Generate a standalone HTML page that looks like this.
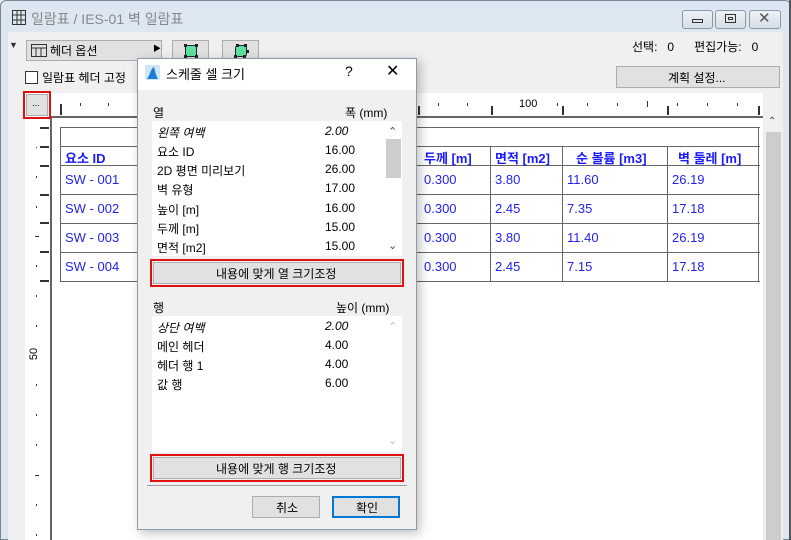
<!DOCTYPE html>
<html><head><meta charset="utf-8"><style>
*{margin:0;padding:0;box-sizing:border-box}
body{width:791px;height:540px;overflow:hidden;position:relative;background:#f0f0f0;font-family:"Liberation Sans","Noto Sans CJK KR",sans-serif;font-size:12px;color:#000}
.a{position:absolute}
.t{position:absolute;white-space:nowrap}
.blue{color:#1a1aff}
.cell{position:absolute;font-size:13px;color:#2222ee}
.hl{position:absolute;background:#666;height:1px}
.vl{position:absolute;background:#666;width:1px}
.tick{position:absolute;background:#333}
.dot{position:absolute;width:3px;height:3px;background:#222}
</style></head><body>
<div class="a" style="left:0;top:0;width:791px;height:540px;background:#dde7f2;border:1px solid #7a8796;border-radius:6px 6px 0 0"></div>
<div class="a" style="left:8px;top:32px;width:775px;height:508px;background:#f0f0f0"></div>
<div class="a" style="left:789px;top:0;width:2px;height:540px;background:#555"></div>
<svg class="a" style="left:12px;top:10px" width="15" height="16"><rect x="0.5" y="0.5" width="13" height="14" fill="none" stroke="#333"/><path d="M0 5H14M0 10H14M5 0V15M9 0V15" stroke="#333"/></svg>
<div class="t" style="left:31px;top:9px;font-size:14px;color:#888">일람표 / IES-01 벽 일람표</div>
<div class="a" style="left:682px;top:10px;width:31px;height:19px;border:1px solid #8a98a8;border-radius:3px;background:linear-gradient(#eef2f7,#d5dde6)"></div>
<div class="a" style="left:692px;top:19px;width:11px;height:4px;border:1px solid #333"></div>
<div class="a" style="left:715px;top:10px;width:31px;height:19px;border:1px solid #8a98a8;border-radius:3px;background:linear-gradient(#eef2f7,#d5dde6)"></div>
<div class="a" style="left:725px;top:14px;width:11px;height:9px;border:1px solid #333"></div>
<div class="a" style="left:728px;top:17px;width:5px;height:3px;border:1px solid #333"></div>
<div class="a" style="left:749px;top:10px;width:32px;height:19px;border:1px solid #8a98a8;border-radius:3px;background:linear-gradient(#eef2f7,#d5dde6)"></div>
<div class="t" style="left:758px;top:9px;font-size:15px;color:#555">✕</div>
<div class="t" style="left:9px;top:40px;font-size:9px;color:#333">▼</div>
<div class="a" style="left:26px;top:40px;width:136px;height:21px;border:1px solid #adadad;background:#e1e1e1"></div>
<svg class="a" style="left:31px;top:44px" width="16" height="13"><rect x="0.5" y="0.5" width="15" height="12" fill="none" stroke="#333"/><path d="M0 4H16M5 4V13M10 4V13" stroke="#333"/></svg>
<div class="t" style="left:50px;top:42px;font-size:12px">헤더 옵션</div>
<div class="t" style="left:153px;top:43px;font-size:8px">▶</div>
<div class="a" style="left:172px;top:40px;width:37px;height:21px;border:1px solid #adadad;background:#e1e1e1"></div>
<div class="a" style="left:185px;top:45px;width:12px;height:12px;background:#5de0a0;border:1px solid #222"></div>
<div class="dot" style="left:184px;top:44px"></div><div class="dot" style="left:195px;top:44px"></div><div class="dot" style="left:184px;top:55px"></div><div class="dot" style="left:195px;top:55px"></div>
<div class="a" style="left:222px;top:40px;width:37px;height:21px;border:1px solid #adadad;background:#e1e1e1"></div>
<div class="a" style="left:235px;top:45px;width:12px;height:12px;background:#5de0a0;border:1px solid #222;border-radius:3px"></div>
<div class="dot" style="left:236px;top:44px"></div><div class="dot" style="left:244px;top:44px"></div><div class="dot" style="left:246px;top:50px"></div><div class="dot" style="left:234px;top:55px"></div><div class="dot" style="left:243px;top:55px"></div>
<div class="t" style="left:632px;top:38px;font-size:12px">선택:&nbsp;&nbsp;&nbsp;0&nbsp;&nbsp;&nbsp;&nbsp;&nbsp;&nbsp;편집가능:&nbsp;&nbsp;&nbsp;0</div>
<div class="a" style="left:25px;top:71px;width:13px;height:13px;border:1px solid #333;background:#fff"></div>
<div class="t" style="left:42px;top:69px;font-size:12px">일람표 헤더 고정</div>
<div class="a" style="left:616px;top:66px;width:164px;height:22px;border:1px solid #adadad;background:#e1e1e1"></div>
<div class="t" style="left:668px;top:69px;font-size:12px">계획 설정...</div>
<div class="a" style="left:25px;top:93px;width:738px;height:447px;background:#fff"></div>
<div class="a" style="left:50px;top:116px;width:713px;height:2px;background:#666"></div>
<div class="a" style="left:50px;top:116px;width:2px;height:424px;background:#666"></div>
<div class="a" style="left:23px;top:91px;width:28px;height:28px;border:2px solid #e01010"></div>
<div class="a" style="left:26px;top:94px;width:22px;height:22px;background:#e1e1e1;border:1px solid #adadad"></div>
<div class="t" style="left:32px;top:98px;font-size:9px">...</div>
<div class="tick" style="left:60px;top:104px;width:2px;height:11px"></div>
<div class="tick" style="left:80px;top:103px;width:1px;height:3px"></div>
<div class="tick" style="left:108px;top:103px;width:1px;height:3px"></div>
<div class="tick" style="left:418px;top:106px;width:2px;height:9px"></div>
<div class="tick" style="left:438px;top:103px;width:1px;height:3px"></div>
<div class="tick" style="left:467px;top:103px;width:1px;height:3px"></div>
<div class="tick" style="left:491px;top:106px;width:2px;height:9px"></div>
<div class="t" style="left:519px;top:98px;font-size:11px">100</div>
<div class="tick" style="left:557px;top:103px;width:1px;height:3px"></div>
<div class="tick" style="left:562px;top:106px;width:2px;height:9px"></div>
<div class="tick" style="left:587px;top:103px;width:1px;height:3px"></div>
<div class="tick" style="left:617px;top:103px;width:1px;height:3px"></div>
<div class="tick" style="left:647px;top:101px;width:1px;height:6px"></div>
<div class="tick" style="left:667px;top:106px;width:2px;height:9px"></div>
<div class="tick" style="left:677px;top:103px;width:1px;height:3px"></div>
<div class="tick" style="left:707px;top:103px;width:1px;height:3px"></div>
<div class="tick" style="left:737px;top:103px;width:1px;height:3px"></div>
<div class="tick" style="left:758px;top:106px;width:2px;height:9px"></div>
<div class="tick" style="left:40px;top:127px;width:9px;height:2px"></div>
<div class="tick" style="left:40px;top:146px;width:9px;height:2px"></div>
<div class="tick" style="left:36px;top:147px;width:1px;height:1px"></div>
<div class="tick" style="left:40px;top:165px;width:9px;height:2px"></div>
<div class="tick" style="left:36px;top:176px;width:1px;height:2px"></div>
<div class="tick" style="left:40px;top:194px;width:9px;height:2px"></div>
<div class="tick" style="left:36px;top:206px;width:1px;height:2px"></div>
<div class="tick" style="left:40px;top:222px;width:9px;height:2px"></div>
<div class="tick" style="left:35px;top:236px;width:4px;height:1px"></div>
<div class="tick" style="left:40px;top:251px;width:9px;height:2px"></div>
<div class="tick" style="left:36px;top:265px;width:1px;height:2px"></div>
<div class="tick" style="left:40px;top:280px;width:9px;height:2px"></div>
<div class="tick" style="left:36px;top:295px;width:1px;height:2px"></div>
<div class="tick" style="left:36px;top:325px;width:1px;height:2px"></div>
<div class="t" style="left:28px;top:348px;font-size:11px;transform:rotate(-90deg)">50</div>
<div class="tick" style="left:36px;top:384px;width:1px;height:2px"></div>
<div class="tick" style="left:36px;top:414px;width:1px;height:2px"></div>
<div class="tick" style="left:36px;top:444px;width:1px;height:2px"></div>
<div class="tick" style="left:35px;top:475px;width:4px;height:1px"></div>
<div class="tick" style="left:36px;top:504px;width:1px;height:2px"></div>
<div class="tick" style="left:36px;top:534px;width:1px;height:2px"></div>
<div class="hl" style="left:60px;top:127px;width:700px"></div>
<div class="hl" style="left:60px;top:146px;width:700px"></div>
<div class="hl" style="left:60px;top:165px;width:700px"></div>
<div class="hl" style="left:60px;top:194px;width:700px"></div>
<div class="hl" style="left:60px;top:223px;width:700px"></div>
<div class="hl" style="left:60px;top:252px;width:700px"></div>
<div class="hl" style="left:60px;top:281px;width:700px"></div>
<div class="vl" style="left:60px;top:127px;height:155px"></div>
<div class="vl" style="left:490px;top:146px;height:136px"></div>
<div class="vl" style="left:562px;top:146px;height:136px"></div>
<div class="vl" style="left:667px;top:146px;height:136px"></div>
<div class="vl" style="left:758px;top:127px;height:155px"></div>
<div class="t blue" style="left:65px;top:148px;font-size:13px;font-weight:bold">요소 ID</div>
<div class="t blue" style="left:424px;top:148px;font-size:13px;font-weight:bold">두께 [m]</div>
<div class="t blue" style="left:495px;top:148px;font-size:13px;font-weight:bold">면적 [m2]</div>
<div class="t blue" style="left:576px;top:148px;font-size:13px;font-weight:bold">순 볼륨 [m3]</div>
<div class="t blue" style="left:678px;top:148px;font-size:13px;font-weight:bold">벽 둘레 [m]</div>
<div class="cell" style="left:65px;top:172px">SW - 001</div>
<div class="cell" style="left:65px;top:201px">SW - 002</div>
<div class="cell" style="left:65px;top:230px">SW - 003</div>
<div class="cell" style="left:65px;top:259px">SW - 004</div>
<div class="cell" style="left:424px;top:172px">0.300</div><div class="cell" style="left:495px;top:172px">3.80</div><div class="cell" style="left:567px;top:172px">11.60</div><div class="cell" style="left:672px;top:172px">26.19</div>
<div class="cell" style="left:424px;top:201px">0.300</div><div class="cell" style="left:495px;top:201px">2.45</div><div class="cell" style="left:567px;top:201px">7.35</div><div class="cell" style="left:672px;top:201px">17.18</div>
<div class="cell" style="left:424px;top:230px">0.300</div><div class="cell" style="left:495px;top:230px">3.80</div><div class="cell" style="left:567px;top:230px">11.40</div><div class="cell" style="left:672px;top:230px">26.19</div>
<div class="cell" style="left:424px;top:259px">0.300</div><div class="cell" style="left:495px;top:259px">2.45</div><div class="cell" style="left:567px;top:259px">7.15</div><div class="cell" style="left:672px;top:259px">17.18</div>
<div class="a" style="left:763px;top:116px;width:20px;height:424px;background:#f0f0f0"></div>
<div class="t" style="left:768px;top:116px;font-size:10px;color:#444">&#8963;</div>
<div class="a" style="left:766px;top:132px;width:15px;height:408px;background:#cdcdcd"></div>
<div class="a" style="left:137px;top:58px;width:280px;height:472px;background:#f0f0f0;border:1px solid #8a9bb0;box-shadow:3px 3px 10px rgba(0,0,0,0.25)"></div>
<div class="a" style="left:138px;top:59px;width:278px;height:31px;background:#fff"></div>
<svg class="a" style="left:145px;top:65px" width="15" height="15"><rect width="15" height="15" rx="2" fill="#cfe6f7"/><path d="M2 14 C5 10 6 3 9 2 C10 6 11 11 13 14Z" fill="#1a7fd0"/></svg>
<div class="t" style="left:166px;top:64px;font-size:13px">스케줄 셀 크기</div>
<div class="t" style="left:345px;top:63px;font-size:14px">?</div>
<div class="t" style="left:386px;top:61px;font-size:16px">✕</div>
<div class="t" style="left:153px;top:104px;font-size:12px">열</div>
<div class="t" style="left:345px;top:104px;font-size:12px">폭 (mm)</div>
<div class="a" style="left:152px;top:121px;width:250px;height:135px;background:#fff"></div>
<div class="t" style="left:157px;top:124px;font-style:italic">왼쪽 여백</div><div class="t" style="left:325px;top:124px;font-style:italic">2.00</div>
<div class="t" style="left:157px;top:143px">요소 ID</div><div class="t" style="left:325px;top:143px">16.00</div>
<div class="t" style="left:157px;top:162px">2D 평면 미리보기</div><div class="t" style="left:325px;top:162px">26.00</div>
<div class="t" style="left:157px;top:181px">벽 유형</div><div class="t" style="left:325px;top:181px">17.00</div>
<div class="t" style="left:157px;top:201px">높이 [m]</div><div class="t" style="left:325px;top:201px">16.00</div>
<div class="t" style="left:157px;top:220px">두께 [m]</div><div class="t" style="left:325px;top:220px">15.00</div>
<div class="t" style="left:157px;top:239px">면적 [m2]</div><div class="t" style="left:325px;top:239px">15.00</div>
<div class="t" style="left:388px;top:125px;font-size:11px;color:#444">&#8963;</div>
<div class="a" style="left:386px;top:139px;width:15px;height:39px;background:#cdcdcd"></div>
<div class="t" style="left:388px;top:239px;font-size:11px;color:#444">&#8964;</div>
<div class="a" style="left:150px;top:259px;width:254px;height:28px;border:2px solid #e01010"></div>
<div class="a" style="left:153px;top:262px;width:248px;height:22px;background:#e1e1e1;border:1px solid #adadad"></div>
<div class="t" style="left:216px;top:265px">내용에 맞게 열 크기조정</div>
<div class="t" style="left:153px;top:299px">행</div>
<div class="t" style="left:336px;top:299px">높이 (mm)</div>
<div class="a" style="left:152px;top:316px;width:250px;height:136px;background:#fff"></div>
<div class="t" style="left:157px;top:319px;font-style:italic">상단 여백</div><div class="t" style="left:325px;top:319px;font-style:italic">2.00</div>
<div class="t" style="left:157px;top:338px">메인 헤더</div><div class="t" style="left:325px;top:338px">4.00</div>
<div class="t" style="left:157px;top:357px">헤더 행 1</div><div class="t" style="left:325px;top:357px">4.00</div>
<div class="t" style="left:157px;top:376px">값 행</div><div class="t" style="left:325px;top:376px">6.00</div>
<div class="t" style="left:388px;top:320px;font-size:11px;color:#bbb">&#8963;</div>
<div class="t" style="left:388px;top:434px;font-size:11px;color:#bbb">&#8964;</div>
<div class="a" style="left:150px;top:454px;width:254px;height:28px;border:2px solid #e01010"></div>
<div class="a" style="left:153px;top:457px;width:248px;height:22px;background:#e1e1e1;border:1px solid #adadad"></div>
<div class="t" style="left:216px;top:460px">내용에 맞게 행 크기조정</div>
<div class="a" style="left:147px;top:485px;width:260px;height:1px;background:#a0a0a0"></div>
<div class="a" style="left:252px;top:496px;width:68px;height:22px;background:#e1e1e1;border:1px solid #adadad"></div>
<div class="t" style="left:276px;top:499px">취소</div>
<div class="a" style="left:332px;top:496px;width:68px;height:22px;background:#e1e1e1;border:2px solid #0078d7"></div>
<div class="t" style="left:356px;top:499px">확인</div>
</body></html>
